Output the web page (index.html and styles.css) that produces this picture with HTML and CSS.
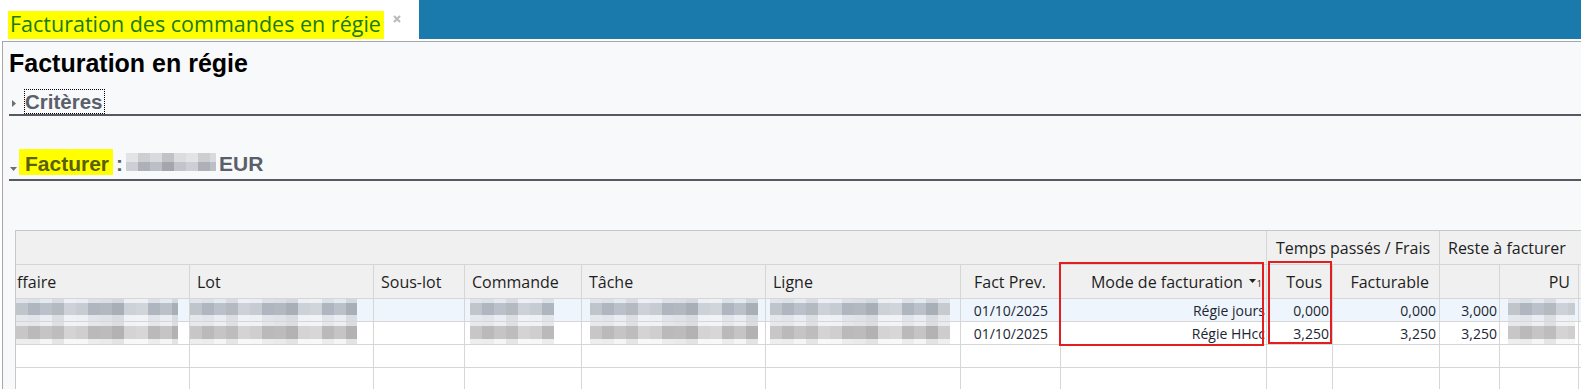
FILE: index.html
```html
<!DOCTYPE html>
<html lang="fr">
<head>
<meta charset="utf-8">
<title>Facturation en régie</title>
<link rel="stylesheet" href="styles.css">
</head>
<body>
<div class="tabbar">
  <div class="tab">
    <span class="tab-title">Facturation des commandes en régie</span>
    <svg class="tab-close" width="8" height="8" viewBox="0 0 8 8"><path d="M1 1L7 7M7 1L1 7" stroke="#b9b9b9" stroke-width="2"/></svg>
  </div>
  <div class="tab-fill"></div>
</div>
<div class="frame">
  <h1 class="page-title">Facturation en régie</h1>
  <div class="sec-criteres">
    <svg class="caret-right" width="4" height="7" viewBox="0 0 4 7"><path d="M0 0L4 3.5L0 7Z" fill="#6e6e6e"/></svg>
    <span class="focus">Critères</span>
  </div>
  <div class="sec-facturer">
    <svg class="caret-down" width="7" height="4" viewBox="0 0 7 4"><path d="M0 0H7L3.5 4Z" fill="#6e6e6e"/></svg>
    <span class="mark">Facturer</span>
    <span class="colon">:</span>
    <span class="mz-eur"></span>
    <span class="eur">EUR</span>
  </div>
  <div class="grid-wrap">
    <div class="grid">
      <div class="c g g-blank"></div>
      <div class="c g g-temps">Temps passés / Frais</div>
      <div class="c g g-reste">Reste à facturer</div>

      <div class="c h h-first">ffaire</div>
      <div class="c h">Lot</div>
      <div class="c h">Sous-lot</div>
      <div class="c h">Commande</div>
      <div class="c h">Tâche</div>
      <div class="c h">Ligne</div>
      <div class="c h r h-fact">Fact Prev.</div>
      <div class="c h r h-mode">Mode de facturation<span class="sort"><svg width="7" height="4" viewBox="0 0 7 4"><path d="M0 0H7L3.5 4Z" fill="#222"/></svg><span class="sort-n">1</span></span></div>
      <div class="c h r">Tous</div>
      <div class="c h r">Facturable</div>
      <div class="c h"></div>
      <div class="c h r h-pu">PU</div>
      <div class="c h"></div>

      <div class="c d sel m"><div class="mz b1 w-aff"></div></div>
      <div class="c d sel m"><div class="mz b1 w-lot"></div></div>
      <div class="c d sel"></div>
      <div class="c d sel m"><div class="mz b1 w-cmd"></div></div>
      <div class="c d sel m"><div class="mz b1 w-tache"></div></div>
      <div class="c d sel m"><div class="mz b1 w-ligne"></div></div>
      <div class="c d sel r d-date">01/10/2025</div>
      <div class="c d sel r d-mode">Régie jours</div>
      <div class="c d sel r">0,000</div>
      <div class="c d sel r">0,000</div>
      <div class="c d sel r d-rest">3,000</div>
      <div class="c d sel m"><div class="mz b1 w-pu"></div></div>
      <div class="c d sel"></div>

      <div class="c d m"><div class="mz b2 w-aff"></div></div>
      <div class="c d m"><div class="mz b2 w-lot"></div></div>
      <div class="c d"></div>
      <div class="c d m"><div class="mz b2 w-cmd"></div></div>
      <div class="c d m"><div class="mz b2 w-tache"></div></div>
      <div class="c d m"><div class="mz b2 w-ligne"></div></div>
      <div class="c d r d-date">01/10/2025</div>
      <div class="c d r d-mode">Régie HHcc</div>
      <div class="c d r">3,250</div>
      <div class="c d r">3,250</div>
      <div class="c d r d-rest">3,250</div>
      <div class="c d m"><div class="mz b2 w-pu"></div></div>
      <div class="c d"></div>

      <div class="c d"></div><div class="c d"></div><div class="c d"></div><div class="c d"></div><div class="c d"></div><div class="c d"></div><div class="c d"></div><div class="c d"></div><div class="c d"></div><div class="c d"></div><div class="c d"></div><div class="c d"></div><div class="c d"></div>
      <div class="c d"></div><div class="c d"></div><div class="c d"></div><div class="c d"></div><div class="c d"></div><div class="c d"></div><div class="c d"></div><div class="c d"></div><div class="c d"></div><div class="c d"></div><div class="c d"></div><div class="c d"></div><div class="c d"></div>
    </div>
    <div class="annot annot-mode"></div>
    <div class="annot annot-tous"></div>
  </div>
</div>
</body>
</html>
```
FILE: styles.css
```css
* { box-sizing: border-box; }
html, body { margin: 0; padding: 0; }
body {
  width: 1581px;
  height: 389px;
  overflow: hidden;
  background: #fff;
  font-family: "Open Sans", sans-serif;
}

/* tab bar */
.tabbar { display: flex; height: 41px; }
.tab {
  width: 419px;
  display: flex;
  align-items: flex-start;
  padding: 11px 0 0 8px;
  background: #fff;
}
.tab-title {
  background: #ffff00;
  color: #1b7a12;
  font-size: 21.5px;
  line-height: 26px;
  height: 28px;
  padding: 0 3px 2px 2px;
  white-space: nowrap;
}
.tab-close { margin: 4px 0 0 9px; }
.tab-fill { flex: 1; height: 39px; background: #1a7aab; }

/* frame */
.frame {
  margin-left: 2px;
  height: 348px;
  border-top: 1px solid #a6a6a6;
  border-left: 1px solid #a6a6a6;
  background: #f8f9fb;
  padding: 7px 0 0 6px;
  overflow: hidden;
}
.page-title {
  margin: 0;
  font: bold 25px/28px "Liberation Sans", Arial, sans-serif;
  color: #000;
}

.sec-criteres {
  margin-top: 12px;
  height: 27px;
  display: flex;
  align-items: center;
  padding-left: 3px;
  border-bottom: 2px solid #555a61;
}
.caret-right { margin-top: 4px; }
.focus {
  margin-left: 8px;
  border: 1px dotted #000;
  padding: 0 1px 0 0;
  font: bold 20.5px/23px "Liberation Sans", Arial, sans-serif;
  color: #5a5f69;
}

.sec-facturer {
  margin-top: 33px;
  display: flex;
  align-items: baseline;
  padding: 0 0 4px 1px;
  border-bottom: 2px solid #555a61;
  font: bold 21px/23px "Liberation Sans", Arial, sans-serif;
  color: #5a5f69;
}
.caret-down { align-self: flex-end; margin: 0 2px 4px 0; }
.mark {
  display: inline-block;
  background: #ffff00;
  color: #5a5f00;
  padding: 3px 4px 0 6px;
  line-height: 23px;
}
.colon { margin-left: 3px; }
.mz-eur {
  display: inline-block;
  width: 90px;
  height: 18px;
  margin-left: 3px;
  margin-bottom: -1px;
  background-image:
    repeating-linear-gradient(90deg, rgba(255,255,255,.35) 0 12px, rgba(0,0,0,.03) 12px 24px, rgba(255,255,255,.12) 24px 36px, rgba(0,0,0,.09) 36px 48px, rgba(255,255,255,.2) 48px 60px),
    linear-gradient(180deg, #d3d5d9 0 9px, #b3b6bd 9px 18px);
}
.eur { margin-left: 3px; }

/* grid */
.grid-wrap {
  position: relative;
  margin: 49px 0 0 6px;
}
.grid {
  display: grid;
  width: max-content;
  grid-template-columns: 174px 184px 91px 117px 184px 195px 100px 206px 66px 107px 60px 79px 60px;
  grid-template-rows: 34px 34px 23px 23px 23px 23px;
  border-top: 1px solid #c8c8c8;
  border-left: 1px solid #c8c8c8;
  font-family: "Open Sans", sans-serif;
}
.c {
  border-right: 1px solid #d6d6d6;
  border-bottom: 1px solid #d6d6d6;
  overflow: hidden;
  white-space: nowrap;
  display: flex;
  align-items: center;
}
.g, .h {
  background: #f0f0f0;
  color: #1e1e1e;
  font-size: 16px;
}
.g-blank { grid-column: 1 / 9; }
.g-temps { grid-column: 9 / 11; justify-content: center; }
.g-reste { grid-column: 11 / 14; padding-left: 8px; border-right: 0; }
.h { padding: 0 7px; }
.h-first { padding-left: 1px; }
.h.r { justify-content: flex-end; padding-right: 10px; }
.h-fact.r { padding-right: 14px; }
.h-mode.r { padding-right: 4px; }
.h-pu.r { padding-right: 8px; }
.sort { display: flex; align-items: center; margin-left: 6px; }
.sort svg { margin-top: -2px; }
.sort-n { font-size: 9px; line-height: 9px; margin: 4px 0 0 1px; }

.d {
  background: #fff;
  color: #1c2633;
  font-size: 14px;
}
.d.sel { background: #eef5fc; }
.d.r { justify-content: flex-end; padding-right: 3px; }
.d-date.r { padding-right: 12px; }
.d-mode.r { padding-right: 1px; }
.d-rest.r { padding-right: 2px; }
.d.m { align-items: stretch; }

.mz {
  height: 100%;
  background-image:
    repeating-linear-gradient(90deg, rgba(255,255,255,.24) 0 12px, rgba(0,0,0,.03) 12px 24px, rgba(255,255,255,.08) 24px 36px, rgba(0,0,0,.07) 36px 48px, rgba(255,255,255,.32) 48px 60px),
    repeating-linear-gradient(90deg, rgba(0,0,0,.05) 0 12px, transparent 12px 36px, rgba(255,255,255,.18) 36px 48px, transparent 48px 84px),
    var(--bands);
}
.b1 { --bands: linear-gradient(180deg, #e3e8ee 0 4px, #b5bcc5 4px 16px, #e8ecf1 16px 22px); }
.b2 { --bands: linear-gradient(180deg, #eceef0 0 4px, #c1bfc0 4px 17px, #f4f4f5 17px 22px); }
.w-aff { width: 162px; }
.w-lot { width: 167px; }
.w-cmd { width: 84px; margin-left: 5px; }
.w-tache { width: 168px; margin-left: 8px; }
.w-ligne { width: 180px; margin-left: 4px; }
.w-pu { width: 67px; margin-left: 8px; }

/* red annotation boxes */
.annot {
  position: absolute;
  border: 2px solid #e41e1e;
}
.annot-mode { left: 1044px; top: 32px; width: 205px; height: 84px; }
.annot-tous { left: 1253px; top: 31px; width: 64px; height: 83px; }
```
